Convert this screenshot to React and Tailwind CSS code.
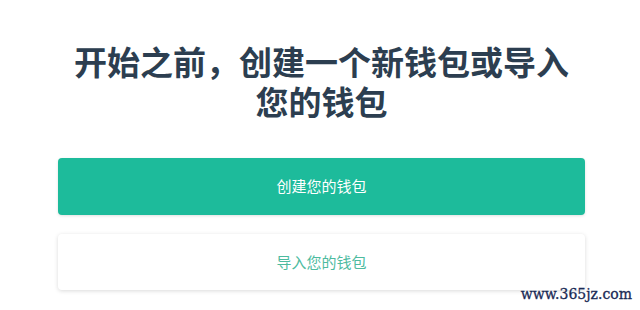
export default function App() {
  return (
    <div className="relative w-[640px] h-[310px] bg-white overflow-hidden" style={{ fontFamily: '"Noto Sans CJK SC", "Noto Sans", sans-serif' }}>
      <div className="flex flex-col items-center pt-[41px] pl-[58px] pr-[55px]">
        <h1 className="w-[520px] text-center text-[33px] leading-[40px] font-bold text-[#2c3e50]">
          开始之前，创建一个新钱包或导入您的钱包
        </h1>
        <button className="mt-[37px] w-full h-[57px] rounded-[4px] bg-[#1dbb9b] text-white text-[15px] shadow-[0_1px_3px_rgba(0,0,0,0.12)]">
          创建您的钱包
        </button>
        <button className="mt-[19px] w-full h-[56px] rounded-[4px] bg-white text-[#4dbb9f] text-[15px] shadow-[0_1px_4px_rgba(0,0,0,0.15)]">
          导入您的钱包
        </button>
      </div>
      <div className="absolute right-[8px] bottom-[9px] text-[14px] leading-none text-[#1a2a55]" style={{ fontFamily: '"DejaVu Serif", serif', WebkitTextStroke: '0.3px #1a2a55' }}>
        www.365jz.com
      </div>
    </div>
  );
}
